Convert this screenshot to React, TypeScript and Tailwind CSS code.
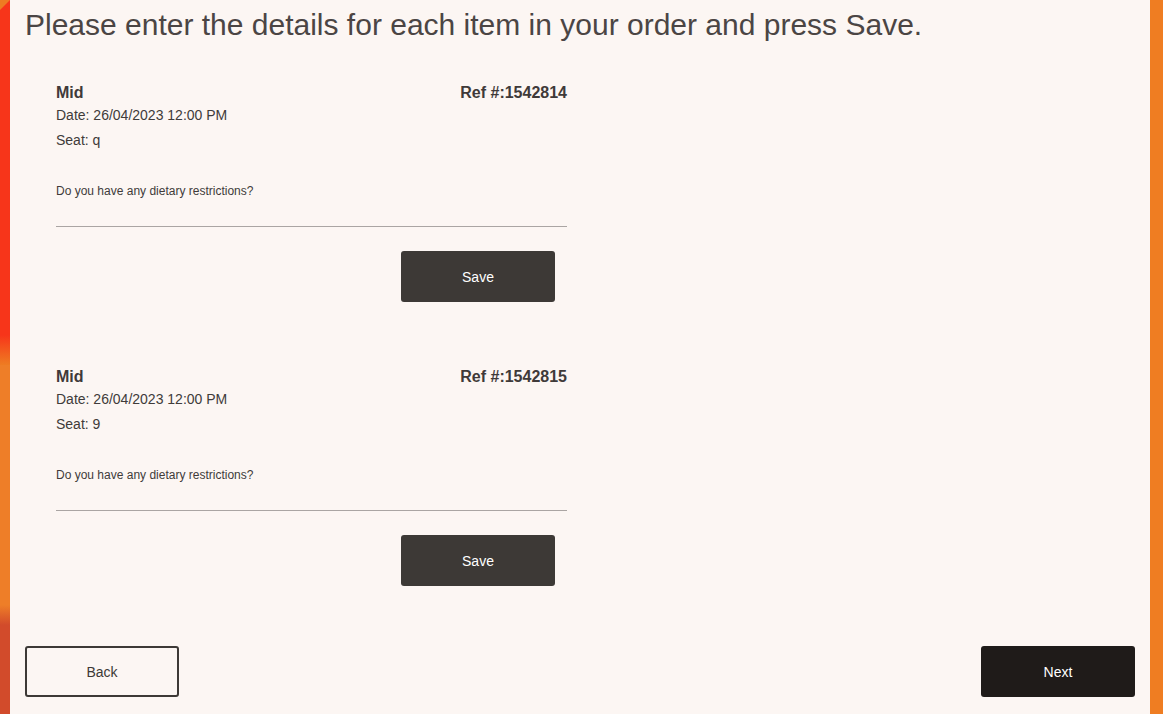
import React from "react";

const font = { fontFamily: '"Liberation Sans", Arial, sans-serif' };

function Item({ ref_, seat }: { ref_: string; seat: string }) {
  return (
    <div className="w-[511px] ml-[31px] flex flex-col">
      <div className="flex justify-between text-[16px] leading-[20px] font-bold text-[#3f3a39]">
        <span>Mid</span>
        <span>Ref #:{ref_}</span>
      </div>
      <div className="mt-[2px] text-[14px] leading-[20px] text-[#403b3a]">Date: 26/04/2023 12:00 PM</div>
      <div className="mt-[5px] text-[14px] leading-[20px] text-[#403b3a]">Seat: {seat}</div>
      <div className="mt-[33px] text-[12px] leading-[16px] text-[#403b3a]">Do you have any dietary restrictions?</div>
      <div className="h-[28px] border-b border-[#aaa5a3]" />
      <div className="flex justify-end pr-[12px] mt-[24px]">
        <button className="w-[154px] h-[51px] pt-[2px] rounded-[3px] bg-[#3d3936] text-white text-[14px]">Save</button>
      </div>
    </div>
  );
}

export default function App() {
  return (
    <div className="flex h-[714px] w-[1163px] overflow-hidden" style={font}>
      <div className="w-[10px] flex flex-col">
        <div className="h-[10px] bg-[linear-gradient(135deg,#ee7c22_0%,#ee7c22_45%,#f7351a_55%)]" />
        <div className="h-[325px] bg-[#f7351a]" />
        <div className="h-[30px] bg-[linear-gradient(to_bottom,#f7351a,#ee7c22)]" />
        <div className="h-[240px] bg-[#ee7e28]" />
        <div className="h-[20px] bg-[linear-gradient(to_bottom,#ee7e28,#d24b2b)]" />
        <div className="flex-1 bg-[#d24b2b]" />
      </div>
      <div className="flex-1 flex flex-col bg-[#fcf6f3] pl-[15px] pr-[15px]">
        <h1 className="mt-[8px] text-[30px] leading-[34px] text-[#4b4544]">
          Please enter the details for each item in your order and press Save.
        </h1>
        <div className="mt-[41px]">
          <Item ref_="1542814" seat="q" />
        </div>
        <div className="mt-[65px]">
          <Item ref_="1542815" seat="9" />
        </div>
        <div className="mt-[60px] flex justify-between">
          <button className="w-[154px] h-[51px] pt-[2px] rounded-[3px] border-2 border-[#3d3936] text-[#3d3936] text-[14px]">Back</button>
          <button className="w-[154px] h-[51px] pt-[2px] rounded-[3px] bg-[#1f1b19] text-white text-[14px]">Next</button>
        </div>
      </div>
      <div className="w-[13px] bg-[#ef7d22]" />
    </div>
  );
}
